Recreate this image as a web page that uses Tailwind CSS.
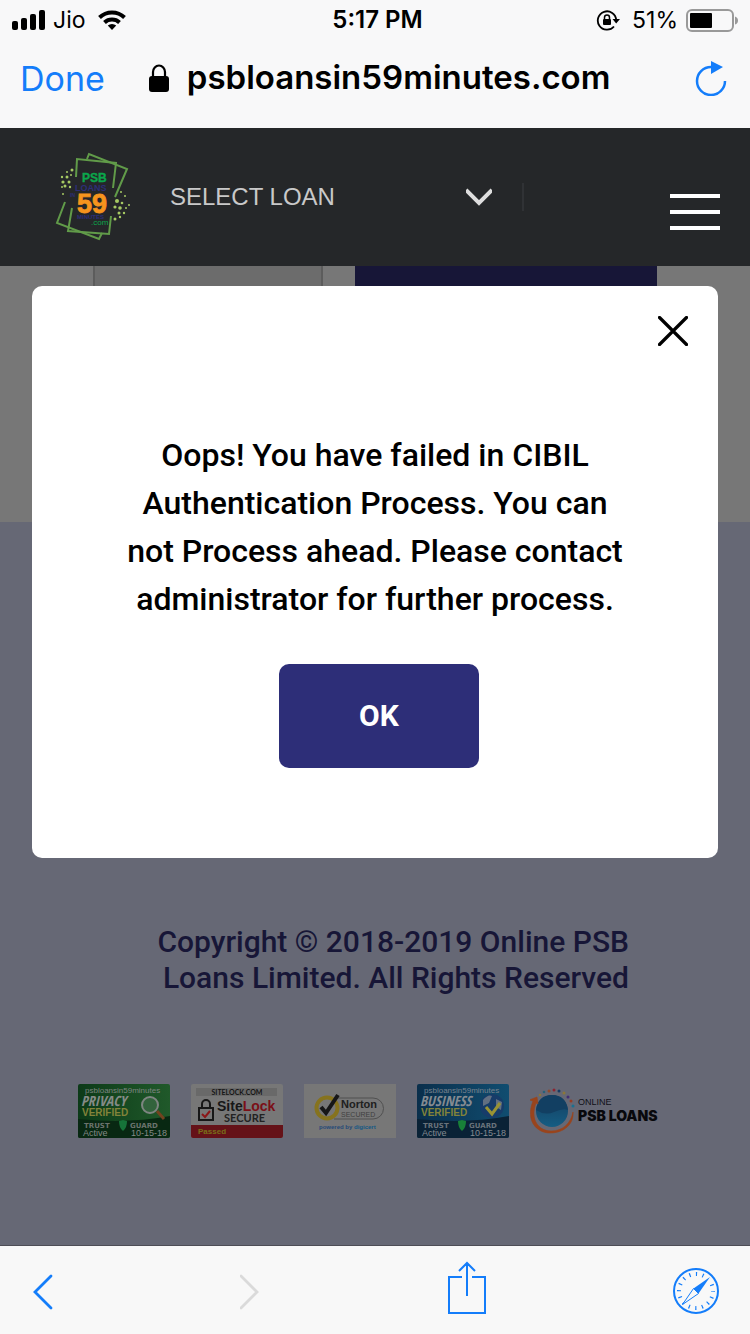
<!DOCTYPE html>
<html lang="en">
<head>
<meta charset="utf-8">
<meta name="viewport" content="width=device-width, initial-scale=1">
<title>psbloansin59minutes.com</title>
<script src="https://cdn.jsdelivr.net/npm/@tailwindcss/browser@4"></script>
</head>
<body class="flex min-h-screen flex-col bg-[#777777] font-['Inter','Liberation_Sans',sans-serif] text-black">

<header class="bg-[#f8f8f9]">
  <div class="flex h-10 items-center pr-[11px] pl-3 text-[23px]">
    <div class="flex flex-1 items-center gap-2">
      <svg class="h-5 w-[33px]" viewBox="0 0 33 20" aria-label="Signal"><rect x="0" y="11" width="6" height="9" rx="2"/><rect x="9" y="8" width="6" height="12" rx="2"/><rect x="18" y="4" width="6" height="16" rx="2"/><rect x="27" y="0" width="6" height="20" rx="2"/></svg>
      <span>Jio</span>
      <svg class="ml-1 h-5 w-7" viewBox="0 0 28 20" fill="none" stroke="#000" stroke-width="4" aria-label="Wi-Fi"><path d="M1.500 7.500a18 18 0 0 1 25 0"/><path d="M6.500 12.500a11 11 0 0 1 15 0"/><path d="M9.800 15.600a6.200 6.200 0 0 1 8.400 0L14 20z" fill="#000" stroke="none"/></svg>
    </div>
    <div class="pl-1 text-2xl font-semibold">5:17 PM</div>
    <div class="flex flex-1 items-center justify-end gap-2">
      <svg class="mr-1 h-6 w-6" viewBox="0 0 24 24" fill="none" stroke="#000" stroke-width="1.800" aria-label="Rotation lock"><path d="M18 18.500A9.200 9.200 0 1 1 20.200 12"/><path d="M16.500 11h7.500l-3.800 4.500z" fill="#000" stroke="none"/><rect x="7" y="11" width="8" height="6" rx="1" fill="#000" stroke="none"/><path d="M8.500 11V9.500a2.500 2.500 0 0 1 5 0V11" stroke-width="1.500"/></svg>
      <span>51%</span>
      <svg class="h-6 w-[53px]" viewBox="0 0 53 24" aria-label="Battery"><rect x="1" y="2" width="46" height="21" rx="5" fill="none" stroke="#999" stroke-width="2"/><rect x="4" y="5" width="22" height="15" rx="1"/><path d="M49 8.500q3 1 3 4t-3 4z" fill="#999"/></svg>
    </div>
  </div>
  <div class="flex h-[88px] items-center px-5 pb-3">
    <button type="button" class="text-[34px] text-[#147dfa]">Done</button>
    <div class="ml-11 flex items-center gap-[18px] text-[33px] font-semibold">
      <svg class="h-7 w-5" viewBox="0 0 20 28" aria-label="Secure"><rect x="0" y="12" width="20" height="16" rx="3"/><path d="M4 13V8a6 6.500 0 0 1 12 0v5" fill="none" stroke="#000" stroke-width="2.200"/></svg>
      <span>psbloansin59minutes.com</span>
    </div>
    <button type="button" aria-label="Reload" class="ml-auto"><svg class="h-9 w-9" viewBox="0 0 36 36"><path d="M17 7A14 14 0 1 0 31 21" fill="none" stroke="#147dfa" stroke-width="2.500"/><path d="M17 1v13l12-7z" fill="#147dfa"/></svg></button>
  </div>
</header>

<nav class="flex h-[138px] items-center bg-[#252729] pr-[30px] pl-[53px]">
  <a href="#" aria-label="PSB Loans in 59 Minutes" class="shrink-0">
    <svg class="h-24 w-20" viewBox="0 0 80 96" fill="none">
      <g stroke="#619b49" stroke-width="2">
        <path d="M34 10l2-5 38 15-12 28"/><path d="M12 53L4 74l42 16 3-6"/>
        <path d="M23 28L24 10l39 4-3 25"/><path d="M19 59l-4 23 41 3 2-18"/>
      </g>
      <g fill="#a6ca63">
        <circle cx="19" cy="21" r="1.500"/><circle cx="14" cy="23" r="1"/><circle cx="9" cy="28" r="1.200"/><circle cx="14" cy="28" r="1.500"/><circle cx="18" cy="26" r="1"/><circle cx="10" cy="33" r="1.600"/><circle cx="16" cy="33" r="1.500"/><circle cx="12" cy="37" r="1.500"/><circle cx="17" cy="38" r="1.200"/><circle cx="9" cy="38" r="1"/><circle cx="10" cy="45" r="1"/>
        <circle cx="68" cy="43" r="1"/><circle cx="72" cy="47" r="1"/><circle cx="64" cy="52" r="2"/><circle cx="69" cy="54" r="1.300"/><circle cx="76" cy="56" r="1"/><circle cx="62" cy="58" r="1.600"/><circle cx="67" cy="59" r="1.800"/><circle cx="73" cy="59" r="1"/><circle cx="66" cy="64" r="1.500"/><circle cx="71" cy="64" r="1.200"/><circle cx="62" cy="70" r="1.500"/><circle cx="67" cy="68" r="1.200"/>
      </g>
      <g font-family="Liberation Sans" font-weight="700">
        <text x="29" y="33" font-size="12" fill="#0ba64b" stroke="#0ba64b" stroke-width=".4">PSB</text>
        <text x="22" y="42" font-size="9" fill="#2d2e78">LOANS</text>
        <text x="17" y="48" font-size="5" fill="#2d2e78">IN</text>
        <text x="24" y="64" font-size="27" fill="#f7941d" stroke="#f7941d" stroke-width=".8">59</text>
        <text x="24" y="70" font-size="6" fill="#2d2e78">MINUTES</text>
        <text x="38" y="76" font-size="8" font-weight="400" fill="#0ba64b">.com</text>
      </g>
    </svg>
  </a>
  <button type="button" class="ml-[37px] flex w-[354px] shrink items-center border-r-2 border-[#303235] pr-[30px] text-left font-['Liberation_Sans',sans-serif] text-2xl leading-7 text-[#c9c9c9]">
    <span class="flex-1">SELECT LOAN</span>
    <svg class="h-[18px] w-[26px]" viewBox="0 0 26 18" fill="none" stroke="#dedede" stroke-width="4"><path d="M0 2l13 13L26 2"/></svg>
  </button>
  <button type="button" aria-label="Menu" class="mt-[30px] ml-auto flex w-[50px] flex-col gap-3"><span class="h-1 bg-white"></span><span class="h-1 bg-white"></span><span class="h-1 bg-white"></span></button>
</nav>

<div class="relative flex flex-1 flex-col">
  <main class="flex h-64 justify-start gap-8 pl-[93px]">
    <div class="h-10 w-[230px] border-x-2 border-[#5c5c5c] bg-[#6c6c6c]"></div>
    <div class="h-10 w-[302px] bg-[#171637]"></div>
  </main>
  <footer class="flex-1 border-b border-[#4d4d55] bg-[#666875] pt-[402px]">
    <p class="pr-[121px] text-right font-['Roboto',sans-serif] text-[30px] leading-9 font-medium text-[#171637]">Copyright © 2018-2019 Online PSB<br>Loans Limited. All Rights Reserved</p>
    <div class="mt-[88px] flex gap-[21px] pl-[78px] font-['Liberation_Sans',sans-serif]">
      <svg class="h-[54px] w-[92px]" viewBox="0 0 92 54" aria-label="Privacy verified">
        <defs><linearGradient id="green" x1="0" y1="0" x2="1" y2="0"><stop offset="0" stop-color="#0c3a18"/><stop offset="1" stop-color="#20592a"/></linearGradient></defs>
        <rect width="92" height="54" rx="2" fill="url(#green)"/><path d="M0 35Q50 40 92 32v20q0 2-2 2H2q-2 0-2-2z" fill="#082812"/>
        <circle cx="72" cy="21" r="8" fill="#32633c" stroke="#7e8581" stroke-width="2"/><path d="M79 27l7 8" stroke="#72431f" stroke-width="3"/>
        <text x="7" y="9" font-size="8" fill="#7e8581">psbloansin59minutes</text>
        <text x="3" y="22" font-size="14" font-weight="700" font-style="italic" font-family="Open Sans Condensed, Liberation Sans Narrow, Liberation Sans" fill="#858b87">PRIVACY</text>
        <text x="4" y="32" font-size="10" font-weight="700" fill="#83833a">VERIFIED</text>
        <g font-size="7" font-weight="700" font-family="DejaVu Sans" fill="#6b736d"><text x="6" y="44">TRUST</text><text x="52" y="44">GUARD</text></g>
        <path d="M41 37l4-1 4 1q0 7-4 10-4-3-4-10z" fill="#167439"/>
        <g font-size="9" fill="#858b87"><text x="5" y="52">Active</text><text x="53" y="52">10-15-18</text></g>
      </svg>
      <svg class="h-[54px] w-[92px]" viewBox="0 0 92 54" aria-label="SiteLock secure">
        <rect width="92" height="54" rx="2" fill="#777"/><rect x="5" y="4" width="81" height="8" fill="#696969"/><path d="M0 41h92v11q0 2-2 2H2q-2 0-2-2z" fill="#651218"/>
        <text x="46" y="11" font-size="7" font-weight="700" font-family="Lato" text-anchor="middle" fill="#151515">SITELOCK.COM</text>
        <rect x="8" y="24" width="14" height="12" fill="none" stroke="#171717" stroke-width="2"/><path d="M11 23v-3a4 4 0 0 1 8 0v3" fill="none" stroke="#171717" stroke-width="2"/><path d="M11 30l3 3 5-6" fill="none" stroke="#8b1719" stroke-width="2"/>
        <text x="26" y="27" font-size="14" font-weight="700" fill="#171717">Site<tspan fill="#7b1017">Lock</tspan></text>
        <text x="33" y="38" font-size="11" font-weight="700" font-family="Lato" fill="#222">SECURE</text>
        <text x="7" y="50" font-size="8" font-weight="700" fill="#796e19">Passed</text>
      </svg>
      <svg class="h-[54px] w-[92px]" viewBox="0 0 92 54" aria-label="Norton secured">
        <rect width="92" height="54" fill="#777"/><path d="M30 14h39a10 10 0 0 1 0 21H30" fill="none" stroke="#505050"/>
        <circle cx="23" cy="24" r="10.500" fill="#777" stroke="#86731e" stroke-width="4"/><path d="M17 23l5 6 12-18" fill="none" stroke="#171717" stroke-width="4"/>
        <text x="37" y="24" font-size="11" font-weight="700" fill="#202020">Norton</text><text x="37" y="33" font-size="7" fill="#3f3f3f">SECURED</text>
        <text x="15" y="45" font-size="6" font-weight="700" fill="#264a78">powered by <tspan fill="#145785">digicert</tspan></text>
      </svg>
      <svg class="h-[54px] w-[92px]" viewBox="0 0 92 54" aria-label="Business verified">
        <defs><linearGradient id="blue" x1="0" y1="0" x2="1" y2="0"><stop offset="0" stop-color="#0a2f4c"/><stop offset="1" stop-color="#104d70"/></linearGradient></defs>
        <rect width="92" height="54" rx="2" fill="url(#blue)"/><path d="M0 35Q50 40 92 32v20q0 2-2 2H2q-2 0-2-2z" fill="#0a2236"/>
        <circle cx="75" cy="22" r="12" fill="#173c69"/><path d="M66 16q5-6 9-4l-3 7-6 3zM79 15l6 3-1 8-5-3z" fill="#626f81"/><path d="M69 23l6 7 8-11" fill="none" stroke="#999334" stroke-width="3"/>
        <text x="7" y="9" font-size="8" fill="#78838e">psbloansin59minutes</text>
        <text x="3" y="22" font-size="14" font-weight="700" font-style="italic" font-family="Open Sans Condensed, Liberation Sans Narrow, Liberation Sans" fill="#858b91">BUSINESS</text>
        <text x="4" y="32" font-size="10" font-weight="700" fill="#83833a">VERIFIED</text>
        <g font-size="7" font-weight="700" font-family="DejaVu Sans" fill="#69727b"><text x="6" y="44">TRUST</text><text x="52" y="44">GUARD</text></g>
        <path d="M41 37l4-1 4 1q0 7-4 10-4-3-4-10z" fill="#188038"/>
        <g font-size="9" fill="#858b91"><text x="5" y="52">Active</text><text x="53" y="52">10-15-18</text></g>
      </svg>
      <svg class="h-[54px] w-[132px]" viewBox="0 0 132 54" aria-label="Online PSB Loans">
        <defs><linearGradient id="orb" x1="0" y1="0" x2="0" y2="1"><stop offset="0" stop-color="#153e60"/><stop offset="1" stop-color="#155d83"/></linearGradient></defs>
        <circle cx="22" cy="27" r="16" fill="url(#orb)"/><path d="M6 26q9 6 18 2t14-2Q36 11 22 11 8 11 6 26z" fill="#123f62"/>
        <path d="M3 17C-5 37 7 49 20 49c14 0 24-9 23-21-2 11-10 19-22 19C8 47 0 35 6 19l2 1-1-7-8 3z" fill="#99441d" stroke="#99441d" stroke-width=".6"/>
        <circle cx="10" cy="11" r="1.300" fill="#8b7637"/><circle cx="14" cy="8" r="1.300" fill="#27617a"/><circle cx="19" cy="7" r="1.500" fill="#91492b"/><circle cx="24" cy="6" r="1.500" fill="#8c2430"/><circle cx="29" cy="7" r="1.500" fill="#163b63"/><circle cx="34" cy="9" r="1.500" fill="#8b7637"/><circle cx="38" cy="13" r="1.500" fill="#432d73"/><circle cx="41" cy="17" r="1.500" fill="#963d24"/><circle cx="43" cy="22" r="1.500" fill="#1a7090"/>
        <text x="48" y="21" font-size="9" fill="#101018">ONLINE</text><text x="48" y="37" font-size="14" font-family="Inter" font-weight="900" fill="#08080c">PSB LOANS</text>
      </svg>
    </div>
  </footer>

  <div role="dialog" aria-modal="true" aria-labelledby="message" class="absolute inset-x-8 top-5 flex flex-col items-center rounded-[10px] bg-white pt-[145px] pb-[90px] font-['Roboto',sans-serif]">
    <button type="button" aria-label="Close" class="absolute top-[30px] right-[30px]"><svg class="h-[30px] w-[30px]" viewBox="0 0 30 30" fill="none" stroke="#000" stroke-width="3.200" stroke-linecap="round"><path d="M1.500 1.500l27 27M28.500 1.500l-27 27"/></svg></button>
    <p id="message" class="text-center text-[32px] leading-12 font-medium">Oops! You have failed in CIBIL<br>Authentication Process. You can<br>not Process ahead. Please contact<br>administrator for further process.</p>
    <button type="button" class="mt-[41px] ml-2 h-[104px] w-[200px] rounded-[10px] bg-[#2d2e78] pb-0.5 text-[30px] font-bold text-white">OK</button>
  </div>
</div>

<div class="flex h-[88px] items-center justify-between bg-[#f8f8f8] pr-[31px] pl-8">
  <button type="button" aria-label="Back"><svg class="mt-1 h-9 w-[22px]" viewBox="0 0 22 36" fill="none" stroke="#147dfa" stroke-width="2.800" stroke-linecap="round"><path d="M19 2L3 18l16 16"/></svg></button>
  <button type="button" aria-label="Forward" disabled><svg class="mt-1 h-9 w-[22px]" viewBox="0 0 22 36" fill="none" stroke="#dadada" stroke-width="2.800" stroke-linecap="round"><path d="M1 2l16 16L1 34"/></svg></button>
  <button type="button" aria-label="Share"><svg class="mb-1 h-[54px] w-10" viewBox="0 0 40 54" fill="none" stroke="#147dfa" stroke-width="2"><path d="M15 16H2v36h36V16H25M20 35V3M12 10l8-8 8 8"/></svg></button>
  <button type="button" aria-label="Open in Safari"><svg class="mt-0.5 h-[46px] w-[46px]" viewBox="0 0 46 46" fill="none" stroke="#147dfa" stroke-width="2"><circle cx="23" cy="23" r="22"/><circle cx="23" cy="23" r="17" stroke-width="4" stroke-dasharray="1.200 5.476" stroke-dashoffset=".6"/><path d="M37 9L20.500 20.500l5 5z" fill="#147dfa" stroke="#f8f8f8" stroke-width="3"/><path d="M37 9L20.500 20.500l5 5z" fill="#147dfa" stroke="none"/><path d="M9.500 36.500l11-16 5 5z" fill="#f8f8f8" stroke-width="1"/></svg></button>
</div>
</body>
</html>
